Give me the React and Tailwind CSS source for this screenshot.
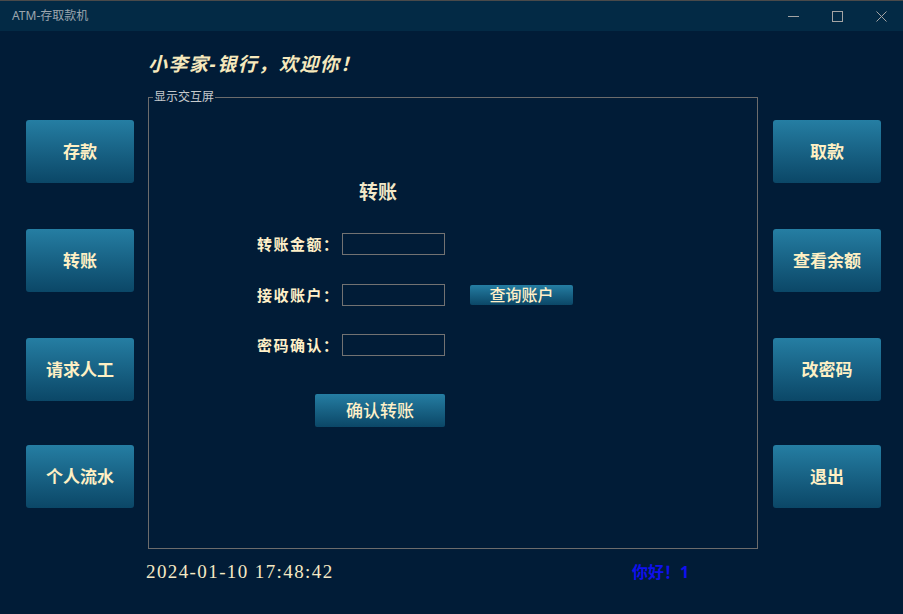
const cjk = "font-['Noto_Sans','Noto_Sans_CJK_SC',sans-serif]";

function SideButton({ label, className = "" }) {
  return (
    <button
      className={`w-[108px] h-[63px] rounded-[3px] bg-gradient-to-b from-[#257ea3] to-[#0b4767] text-[#fff0c4] text-[17px] font-bold ${cjk} ${className}`}
    >
      {label}
    </button>
  );
}

function FormRow({ label, className = "", children }) {
  return (
    <div className={`flex items-center pl-[108px] ${className}`}>
      <span className="w-[85px] text-[15px] leading-[22px] font-bold tracking-[1.5px] text-[#fff0c8]">{label}</span>
      <input className="w-[103px] h-[22px] border border-[#727272] bg-transparent outline-none text-white" />
      {children}
    </div>
  );
}

export default function App() {
  return (
    <div className={`w-[903px] h-[614px] bg-[#011c37] overflow-hidden ${cjk}`}>

      {/* TITLE BAR */}

      <div className="h-[31px] bg-[#032a45] border-t border-[#4a4a4a] flex items-center">
        <span className="ml-[12px] text-[12px] text-[#9ca6ae]">ATM-存取款机</span>
        <div className="ml-auto flex items-center">
          <svg width="11" height="11" viewBox="0 0 11 11" className="mr-[33px] mt-[1px]">
            <path d="M0 5.5H11" stroke="#a4a4a4" strokeWidth="1" />
          </svg>
          <svg width="11" height="11" viewBox="0 0 11 11" className="mr-[33px]">
            <rect x="0.5" y="0.5" width="10" height="10" fill="none" stroke="#a4a4a4" strokeWidth="1" />
          </svg>
          <svg width="11" height="11" viewBox="0 0 11 11" className="mr-[16px]">
            <path d="M0.5 0.5L10.5 10.5M10.5 0.5L0.5 10.5" stroke="#a4a4a4" strokeWidth="1" />
          </svg>
        </div>
      </div>

      <div className="flex items-start">

        {/* LEFT */}

        <div className="ml-[26px] mt-[89px] w-[108px] flex flex-col">
          <SideButton label="存款" />
          <SideButton label="转账" className="mt-[46px]" />
          <SideButton label="请求人工" className="mt-[46px]" />
          <SideButton label="个人流水" className="mt-[44px]" />
        </div>

        {/* CENTER */}

        <div className="ml-[14px] w-[610px] flex flex-col">

          <p className="mt-[21px] h-[24px] leading-[24px] text-[19px] italic font-bold tracking-[1.5px] text-[#f6e9bd]">
            小李家-银行，欢迎你！
          </p>

          <div className="relative mt-[21px] h-[452px] border border-[#6c6c6c]">

            <span className="absolute left-[4px] top-[-8px] px-[1px] bg-[#011c37] text-[12px] leading-[14px] text-[#c6cacd]">
              显示交互屏
            </span>

            <div className="ml-[189px] w-[80px] pt-[81px] text-center text-[19px] leading-[26px] font-bold text-[#f2e8c8]">
              转账
            </div>

            <FormRow label="转账金额：" className="mt-[28px]" />

            <FormRow label="接收账户：" className="mt-[29px]">
              <button className="ml-[25px] w-[103px] h-[20px] rounded-[2px] bg-gradient-to-b from-[#257ea3] to-[#0b4767] text-[16px] leading-[20px] font-medium text-[#fff0c8]">
                查询账户
              </button>
            </FormRow>

            <FormRow label="密码确认：" className="mt-[28px]" />

            <button className="mt-[38px] ml-[166px] w-[130px] h-[33px] rounded-[2px] bg-gradient-to-b from-[#257ea3] to-[#0b4767] text-[17px] font-medium text-[#fff0c8]">
              确认转账
            </button>

          </div>

          {/* STATUS */}

          <div className="mt-[11px] -ml-[2px] flex items-center h-[24px]">
            <span className="w-[486px] font-['Liberation_Serif',serif] text-[19px] tracking-[1.4px] text-[#f6e9c4]">
              2024-01-10 17:48:42
            </span>
            <span className="text-[16px] font-bold text-[#1010ee]">你好！1</span>
          </div>

        </div>

        {/* RIGHT */}

        <div className="ml-[15px] mt-[89px] w-[108px] flex flex-col">
          <SideButton label="取款" />
          <SideButton label="查看余额" className="mt-[46px]" />
          <SideButton label="改密码" className="mt-[46px]" />
          <SideButton label="退出" className="mt-[44px]" />
        </div>

      </div>

    </div>
  );
}
